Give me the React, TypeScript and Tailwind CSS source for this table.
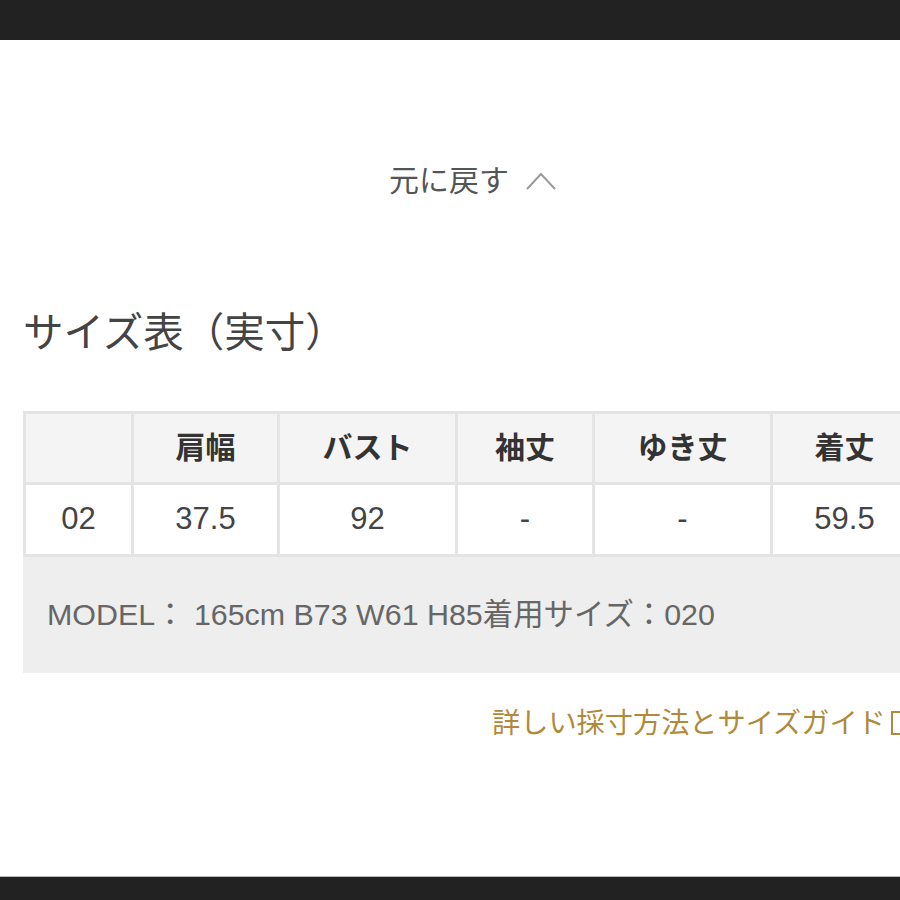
const font = { fontFamily: '"Liberation Sans", "Noto Sans CJK JP", sans-serif' };

const cols = [
  { head: "", val: "02", w: "w-[108px]" },
  { head: "肩幅", val: "37.5", w: "w-[146px]" },
  { head: "バスト", val: "92", w: "w-[178px]" },
  { head: "袖丈", val: "-", w: "w-[137px]" },
  { head: "ゆき丈", val: "-", w: "w-[178px]" },
  { head: "着丈", val: "59.5", w: "w-[146px]" },
];

export default function App() {
  return (
    <div
      className="flex h-[900px] w-[900px] flex-col overflow-hidden bg-white"
      style={font}
    >
      <div className="h-[40px] shrink-0 bg-[#222222]" />

      <div className="flex flex-1 flex-col">
        <div className="mt-[120px] flex items-center justify-center gap-[16px] pl-[46px] text-[30px] leading-[42px] text-[#555]">
          <span>元に戻す</span>
          <svg width="32" height="20" viewBox="0 0 32 20" fill="none">
            <polyline points="2,18 16,3 30,18" stroke="#9a9a9a" strokeWidth="2" />
          </svg>
        </div>

        <h2 className="ml-[23px] mt-[111px] text-[40.5px] font-normal leading-none text-[#444]">
          サイズ表（実寸）
        </h2>

        <div className="ml-[23px] mt-[57px] w-[960px]">
          <div className="flex border-t-[3px] border-[#e4e4e4]">
            {cols.map((c, i) => (
              <div
                key={i}
                className={`${c.w} flex h-[71px] shrink-0 items-center justify-center border-l-[3px] border-b-[3px] border-[#e4e4e4] bg-[#f4f4f4] text-[30px] font-bold text-[#333]`}
              >
                {c.head}
              </div>
            ))}
          </div>
          <div className="flex">
            {cols.map((c, i) => (
              <div
                key={i}
                className={`${c.w} flex h-[72px] shrink-0 items-center justify-center border-l-[3px] border-b-[3px] border-[#e4e4e4] bg-white text-[31px] text-[#444]`}
              >
                {c.val}
              </div>
            ))}
          </div>
          <div className="flex h-[116px] items-center bg-[#eeeeee] pl-[24px] text-[30.4px] text-[#666]">
            MODEL： 165cm B73 W61 H85着用サイズ：020
          </div>
        </div>

        <div className="mt-[29px] flex items-center gap-[5px] pl-[492px] text-[28.2px] text-[#b08a3a]">
          <span className="whitespace-nowrap">詳しい採寸方法とサイズガイド</span>
          <span className="inline-block h-[24px] w-[22px] shrink-0 border-2 border-[#b08a3a]" />
        </div>
      </div>

      <div className="h-[24px] shrink-0 border-t border-[#bbb] bg-[#222222]" />
    </div>
  );
}
